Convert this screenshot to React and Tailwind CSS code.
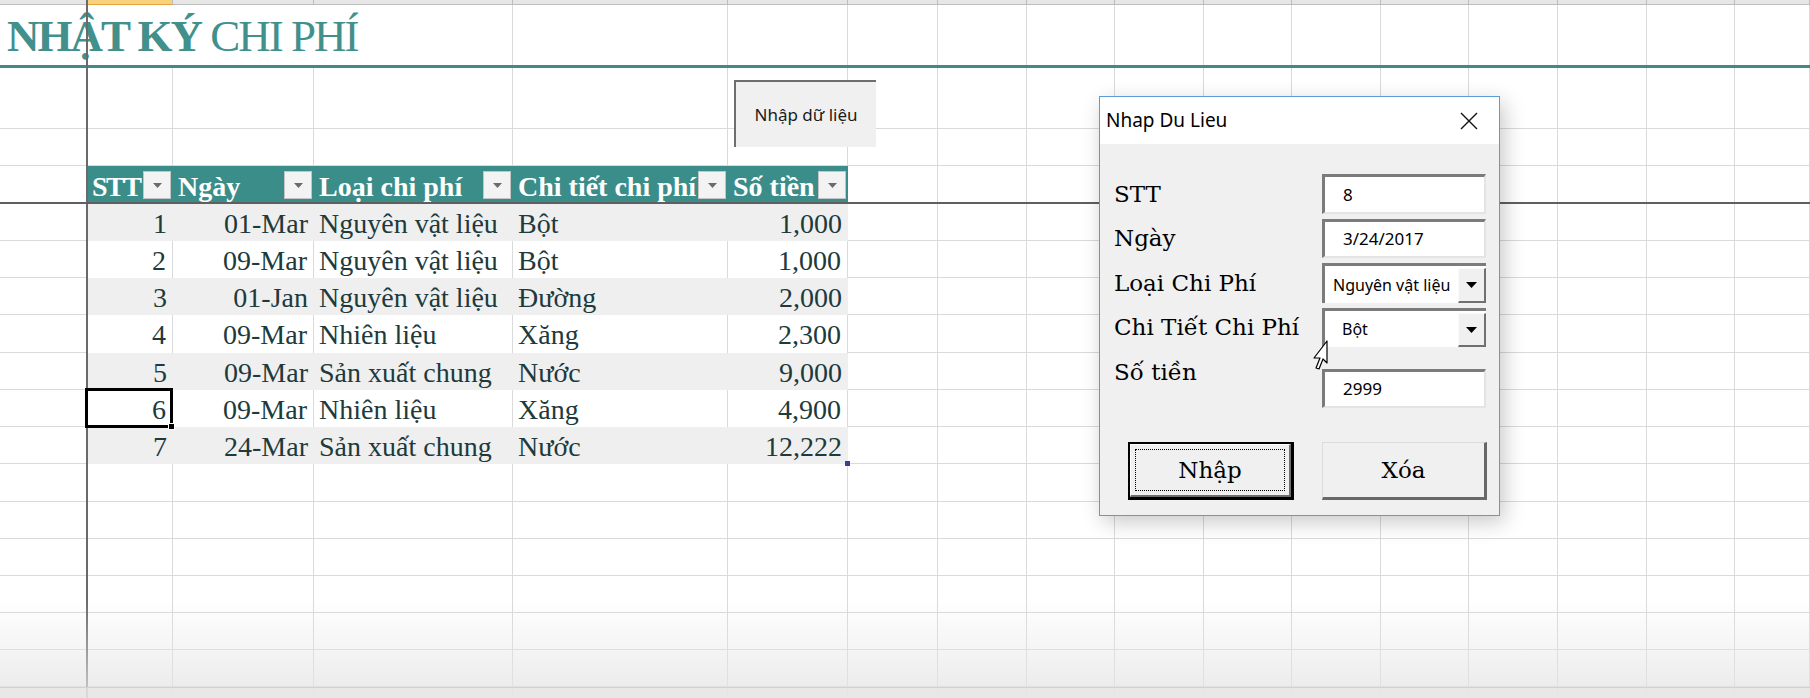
import React from "react";

const GRID =
  "grid grid-cols-[87px_86px_141px_199px_215px_120px_90px_89px_88px_89px_88px_89px_88px_89px_89px_88px_1fr]";
const SERIF = "font-['Liberation_Serif','Times_New_Roman',serif]";
const DLG = "font-['DejaVu_Serif',serif]";
const SANS = "font-['Noto_Sans','Open_Sans',sans-serif]";

const records = [
  { stt: 1, ngay: "01-Mar", loai: "Nguyên vật liệu", chiTiet: "Bột", tien: "1,000" },
  { stt: 2, ngay: "09-Mar", loai: "Nguyên vật liệu", chiTiet: "Bột", tien: "1,000" },
  { stt: 3, ngay: "01-Jan", loai: "Nguyên vật liệu", chiTiet: "Đường", tien: "2,000" },
  { stt: 4, ngay: "09-Mar", loai: "Nhiên liệu", chiTiet: "Xăng", tien: "2,300" },
  { stt: 5, ngay: "09-Mar", loai: "Sản xuất chung", chiTiet: "Nước", tien: "9,000" },
  { stt: 6, ngay: "09-Mar", loai: "Nhiên liệu", chiTiet: "Xăng", tien: "4,900" },
  { stt: 7, ngay: "24-Mar", loai: "Sản xuất chung", chiTiet: "Nước", tien: "12,222" },
];
const dataHeights = ["h-[37px]", "h-[37px]", "h-[37px]", "h-[38px]", "h-[37px]", "h-[37px]", "h-[37px]"];
const emptyHeights = ["h-[38px]", "h-[37px]", "h-[37px]", "h-[37px]", "h-[37px]", "h-[37px]", "h-[37px]"];

const Blank = ({ count }) =>
  Array.from({ length: count }, (_, i) => (
    <div key={i} className="border-r border-b border-[#dadada]" />
  ));

const FilterBtn = () => (
  <div className="w-[28px] h-[28px] shrink-0 bg-[#f3f3f3] border border-[#c4c4c4] flex items-center justify-center">
    <svg width="9" height="5" viewBox="0 0 9 5">
      <path d="M0 0h9L4.5 5z" fill="#6b6b6b" />
    </svg>
  </div>
);

const HeadCell = ({ label, tight }) => (
  <div className="bg-[#3a8d89] flex items-center justify-between pl-[5px] pr-[2px] overflow-hidden">
    <span
      className={`${SERIF} self-start pt-[7px] text-[28px] leading-none font-bold text-white whitespace-nowrap ${
        tight ? "tracking-[-1.5px]" : ""
      }`}
    >
      {label}
    </span>
    <FilterBtn />
  </div>
);

const DataCell = ({ children, right, band, selected, handle }) => (
  <div
    className={`relative flex items-start pt-[6px] whitespace-nowrap ${SERIF} text-[28px] leading-none text-[#203a3c] ${
      band ? "bg-[#efefef]" : "border-r border-[#dadada]"
    } ${right ? "justify-end pr-[6px]" : "pl-[5px]"}`}
  >
    {children}
    {selected && (
      <div className="absolute -left-[2px] -top-[2px] -right-[1px] -bottom-[1px] border-[3px] border-black z-10">
        <div className="absolute -right-[5px] -bottom-[5px] w-[7px] h-[7px] bg-black border border-white" />
      </div>
    )}
    {handle && <div className="absolute -right-[2px] -bottom-[2px] w-[5px] h-[5px] bg-[#35409e] z-10" />}
  </div>
);

const TextField = ({ value, h = "h-[40px]", extra = "" }) => (
  <div
    className={`${h} w-[164px] bg-white border-t-[3px] border-l-[3px] border-r-2 border-b-2 border-t-[#7b7b7b] border-l-[#7b7b7b] border-r-[#e4e4e4] border-b-[#e4e4e4] flex items-center pl-[18px] ${SANS} text-[17px] text-black ${extra}`}
  >
    {value}
  </div>
);

const Combo = ({ value, h = "h-[40px]", pad = "pl-[17px]" }) => (
  <div
    className={`${h} w-[164px] bg-white border-t-[3px] border-l-[3px] border-t-[#7b7b7b] border-l-[#7b7b7b] flex items-stretch`}
  >
    <div className={`flex-1 flex items-center ${pad} ${SANS} text-[16px] text-black whitespace-nowrap overflow-hidden`}>
      {value}
    </div>
    <div className="w-[28px] mt-[2px] bg-[#f0f0f0] border-l border-t border-[#fafafa] border-r-2 border-b-2 border-r-[#707070] border-b-[#707070] flex items-center justify-center">
      <svg width="11" height="6" viewBox="0 0 11 6">
        <path d="M0 0h11L5.5 6z" fill="#000" />
      </svg>
    </div>
  </div>
);

const Label = ({ children, extra = "" }) => (
  <div className={`w-[208px] ${DLG} text-[23px] text-black leading-none whitespace-nowrap ${extra}`}>{children}</div>
);

export default function App() {
  return (
    <div className="relative w-[1810px] h-[698px] overflow-hidden bg-white">
      {/* column heading strip */}
      <div className={`${GRID} h-[5px]`}>
        <div className="bg-[#e6e6e6] border-r border-b border-[#bdbdbd]" />
        <div className="bg-[#f7d27c] border-r border-[#bdbdbd] border-b border-b-[#e2a13c]" />
        {Array.from({ length: 15 }, (_, i) => (
          <div key={i} className="bg-[#e6e6e6] border-r border-b border-[#bdbdbd]" />
        ))}
      </div>

      {/* title row */}
      <div className={`${GRID} h-[63px] border-b-[3px] border-[#3f8b87]`}>
        <div className={`col-span-4 border-r border-[#dadada] pl-[7px] pt-[9px] ${SERIF} text-[45px] tracking-[-2px] leading-none text-[#42908c] whitespace-nowrap`}>
          <span className="font-bold">NHẬT KÝ</span> CHI PHÍ
        </div>
        {Array.from({ length: 13 }, (_, i) => (
          <div key={i} className="border-r border-[#dadada]" />
        ))}
      </div>

      <div className={`${GRID} h-[61px]`}>
        <Blank count={17} />
      </div>
      <div className={`${GRID} h-[37px]`}>
        <Blank count={17} />
      </div>

      {/* table header */}
      <div className={`${GRID} h-[38px]`}>
        <Blank count={1} />
        <HeadCell label="STT" tight />
        <HeadCell label="Ngày" />
        <HeadCell label="Loại chi phí" />
        <HeadCell label="Chi tiết chi phí" />
        <HeadCell label="Số tiền" />
        <Blank count={11} />
      </div>

      {records.map((r, i) => {
        const band = i % 2 === 0;
        return (
          <div key={r.stt} className={`${GRID} ${dataHeights[i]}`}>
            <Blank count={1} />
            <DataCell right band={band} selected={r.stt === 6}>
              {r.stt}
            </DataCell>
            <DataCell right band={band}>
              {r.ngay}
            </DataCell>
            <DataCell band={band}>{r.loai}</DataCell>
            <DataCell band={band}>{r.chiTiet}</DataCell>
            <DataCell right band={band} handle={i === records.length - 1}>
              {r.tien}
            </DataCell>
            <Blank count={11} />
          </div>
        );
      })}

      {emptyHeights.map((h, i) => (
        <div key={i} className={`${GRID} ${h}`}>
          <Blank count={17} />
        </div>
      ))}

      {/* frozen pane lines */}
      <div className="absolute left-[86px] top-0 bottom-0 w-[2px] bg-[#6a6a6a]" />
      <div className="absolute left-0 right-0 top-[202px] h-[2px] bg-[#5f5f5f]" />

      {/* bottom fade */}
      <div className="absolute left-0 right-0 top-[600px] h-[87px] bg-linear-to-b from-transparent to-[#e4e4e4]/70 pointer-events-none" />
      <div className="absolute left-0 right-0 top-[687px] bottom-0 bg-[#e6e6e6]/90 border-t border-[#d2d2d2]" />

      {/* sheet button */}
      <div className={`absolute left-[734px] top-[80px] w-[142px] h-[67px] bg-[#f0f0f0] border-l-2 border-t-2 border-[#6e6e6e] flex items-center justify-center ${SANS} text-[17px] text-[#1b1b1b]`}>
        Nhập dữ liệu
      </div>

      {/* user form */}
      <div className="absolute left-[1099px] top-[96px] w-[401px] h-[420px] bg-[#f0f0f0] border border-[#5c9bd6] shadow-[4px_6px_20px_rgba(0,0,0,0.22)] flex flex-col">
        <div className="h-[47px] bg-white flex items-center justify-between pl-[6px] pr-[21px]">
          <span className={`${SANS} text-[19px] text-black`}>Nhap Du Lieu</span>
          <svg width="18" height="18" viewBox="0 0 18 18">
            <path d="M1 1l16 16M17 1L1 17" stroke="#111" strokeWidth="1.4" />
          </svg>
        </div>

        <div className="flex flex-col pl-[14px] pt-[30px]">
          <div className="flex flex-col gap-[5px]">
            <div className="flex items-center">
              <Label>STT</Label>
              <TextField value="8" />
            </div>
            <div className="flex items-center">
              <Label>Ngày</Label>
              <TextField value="3/24/2017" h="h-[39px]" />
            </div>
            <div className="flex items-center">
              <Label>Loại Chi Phí</Label>
              <Combo value="Nguyên vật liệu" pad="pl-[8px]" />
            </div>
            <div className="flex items-center">
              <Label>Chi Tiết Chi Phí</Label>
              <Combo value="Bột" h="h-[39px]" />
            </div>
            <div className="flex items-start">
              <Label extra="h-[40px] flex items-center">Số tiền</Label>
              <TextField value="2999" h="h-[39px]" extra="mt-[17px]" />
            </div>
          </div>

          <div className="flex mt-[34px]">
            <div className="ml-[14px] w-[166px] h-[58px] border-2 border-black border-r-[3px] border-b-[3px]">
              <div className="h-full bg-[#f0f0f0] border-t border-l border-white border-r-2 border-b-2 border-r-[#6d6d6d] border-b-[#6d6d6d] p-[4px]">
                <div className={`h-full border border-dotted border-black flex items-center justify-center ${DLG} text-[23px] text-black`}>
                  Nhập
                </div>
              </div>
            </div>
            <div className={`ml-[28px] w-[165px] h-[58px] bg-[#f0f0f0] border-t border-l border-[#dcdcdc] border-r-[3px] border-b-[3px] border-r-[#686868] border-b-[#686868] flex items-center justify-center ${DLG} text-[23px] text-black`}>
              Xóa
            </div>
          </div>
        </div>
      </div>

      {/* mouse cursor */}
      <svg className="absolute left-[1311px] top-[340px]" width="20" height="34" viewBox="0 0 20 34">
        <path
          d="M16 1 L16 23 L12 19 L8 29 L5 28 L9 18 L3 18 Z"
          fill="#fff"
          stroke="#000"
          strokeWidth="1.2"
          strokeLinejoin="round"
        />
      </svg>
    </div>
  );
}
